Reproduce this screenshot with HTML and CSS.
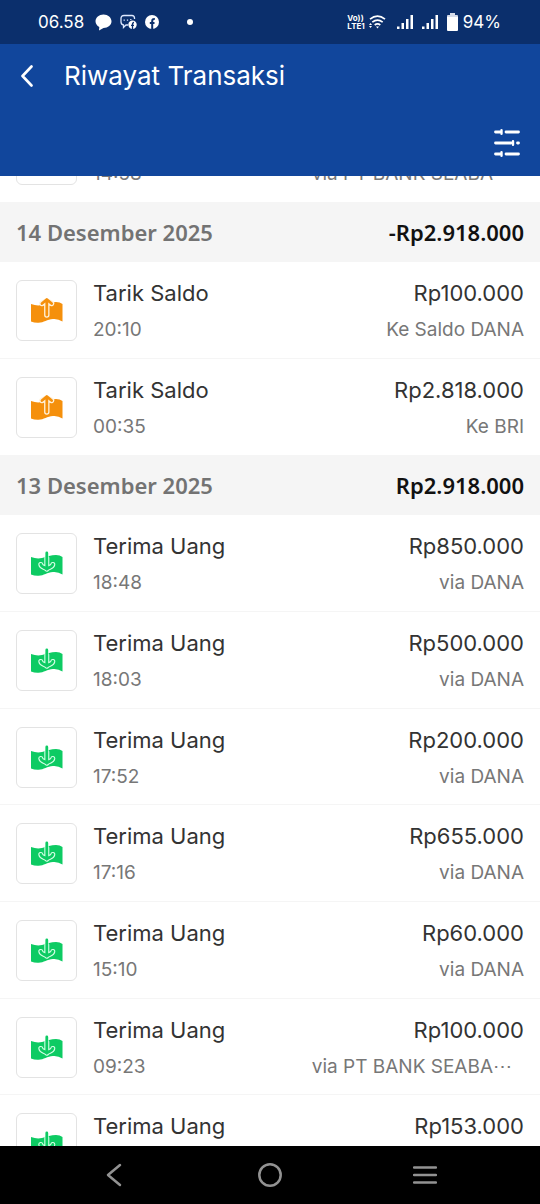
FILE: index.html
```html
<!DOCTYPE html>
<html lang="id">
<head>
<meta charset="utf-8">
<meta name="viewport" content="width=device-width, initial-scale=1">
<title>Riwayat Transaksi</title>
<link rel="stylesheet" href="styles.css">
</head>
<body>
<svg class="sprite" width="0" height="0" aria-hidden="true">
  <symbol id="money-in" viewBox="0 0 32 28">
    <path fill="#0dcb63" d="M0 7Q6 9.300 11 8C16 6.500 20 5 25 5Q29 5 31.500 7V24.500Q27 21.500 22 22C16 22.500 13 25.500 7.500 25.800Q3.500 26 0 24.500Z"/>
    <path fill="none" stroke="#d5ffe6" stroke-width="5" stroke-linecap="round" stroke-linejoin="round" d="M9.800 14.500 C10.300 17.500 14 17 15.800 19.200 C17.600 17 21.300 17.500 21.800 14.500 M15.800 8 V17"/>
    <path fill="none" stroke="#0dcb63" stroke-width="2.800" stroke-linecap="round" stroke-linejoin="round" d="M9.800 14.500 C10.300 17.500 14 17 15.800 19.200 C17.600 17 21.300 17.500 21.800 14.500 M15.800 3 V18"/>
  </symbol>
  <symbol id="money-out" viewBox="0 0 32 28">
    <path fill="#f5900c" d="M0 7Q6 9.300 11 8C16 6.500 20 5 25 5Q29 5 31.500 7V24.500Q27 21.500 22 22C16 22.500 13 25.500 7.500 25.800Q3.500 26 0 24.500Z"/>
    <path fill="none" stroke="#fff1da" stroke-width="5.400" stroke-linecap="round" stroke-linejoin="round" d="M11 6.500L15.800 4L20.600 6.500M15.800 7V18"/>
    <path fill="none" stroke="#f5900c" stroke-width="2.800" stroke-linecap="round" stroke-linejoin="round" d="M11 6.500L15.800 2.500L20.600 6.500M15.800 3.500V18"/>
  </symbol>
</svg>
<div class="screen">
  <div class="status">
    <div class="status-side">
      <span class="clock">06.58</span>
      <svg width="17" height="17" viewBox="0 0 17 17" fill="#fff"><path d="M8.500 0.500C13 .5 16.500 3.500 16.500 7.300S13 14 8.500 14L4 16.500 4.300 13C2 11.800.5 9.800.5 7.300.5 3.500 4 .5 8.500.5Z"/></svg>
      <svg width="17" height="17" viewBox="0 0 17 17" fill="none" stroke="#dfe9ff" stroke-width="1.300"><path d="M14.500 5V4Q14.500 1.500 12 1.500H4Q1 1.500 1 4.500V8Q1 10.500 3.500 11V13.500L6 11H8"/><path d="M4.200 5.500v1.200M7.500 5.500v1.200M10.800 5v1"/><circle cx="12.500" cy="10.700" r="4.200" fill="#fff" stroke="none"/><path stroke="#0b2f6c" d="M12.500 15V10Q12.500 8.500 14 8.500M11 11.300h3"/></svg>
      <svg width="14" height="14" viewBox="0 0 14 14"><circle cx="7" cy="7" r="7" fill="#fff"/><path fill="none" stroke="#0b2f6c" stroke-width="2" d="M7.200 14V6Q7.200 3.800 9.800 4M4.800 8h4.700"/></svg>
      <span class="dot"></span>
    </div>
    <div class="status-side status-right">
      <span class="lte"><span>Vo))</span><span>LTE1</span></span>
      <svg width="17" height="14" viewBox="0 0 17 14" fill="none" stroke="#fff" stroke-width="1.700"><path d="M1 4.200Q8.500-2 16 4.200M3.300 7.200Q8.500 3 13.700 7.200M5.700 10Q8.500 7.800 11.300 10"/><path fill="#fff" stroke="none" d="M7 11.500h3L8.500 13.500ZM0 10l1.500-2L3 10ZM0 11h3l-1.500 2Z"/></svg>
      <svg class="signal" width="16" height="15" viewBox="0 0 16 15" fill="#fff"><path d="M0 11.500h2.500V14H0ZM4.500 8H7v6H4.500ZM9 4h2.500v10H9ZM13.500 0H16v14h-2.500Z"/></svg>
      <svg class="signal" width="16" height="15" viewBox="0 0 16 15" fill="#fff"><path d="M0 11.500h2.500V14H0ZM4.500 8H7v6H4.500ZM9 4h2.500v10H9ZM13.500 0H16v14h-2.500Z"/></svg>
      <svg class="battery" width="11" height="18" viewBox="0 0 11 18"><path fill="#d6dcea" d="M3 0h5v2h2q1 0 1 1v2H0V3q0-1 1-1h2Z"/><path fill="#fff" d="M0 4h11v13q0 1-1 1H1q-1 0-1-1Z"/></svg>
      <span class="percent">94%</span>
    </div>
  </div>
  <header class="appbar">
    <div class="title-row">
      <button class="icon-button" type="button" aria-label="Kembali"><svg width="12" height="22" viewBox="0 0 12 22" fill="none" stroke="#fff" stroke-width="2.600" stroke-linecap="round" stroke-linejoin="round"><path d="M10.500 1.500L1.500 11l9 9.500"/></svg></button>
      <h1>Riwayat Transaksi</h1>
    </div>
    <button class="icon-button filter" type="button" aria-label="Filter"><svg width="26" height="28" viewBox="0 0 26 28" fill="none" stroke="#fff" stroke-width="2.800" stroke-linecap="round"><path d="M1.500 3H6M12 3h12.500M1.500 14H17M23.500 14h1M1.500 25H6M12 25h12.500"/><path stroke-width="2.400" d="M7.500 1.200v3.600M19 12.200v3.600M7.500 23.200v3.600"/></svg></button>
  </header>
  <main class="history">
    <ul class="rows scrolled">
      <li class="row"><span class="tile"><svg><use href="#money-in"/></svg></span><span class="info"><span class="name">Terima Uang</span><span class="note">14:58</span></span><span class="info end"><span class="name">Rp100.000</span><span class="note cut">via PT BANK SEABA</span></span></li>
    </ul>
    <h2 class="day"><span>14 Desember 2025</span><span class="sum">-Rp2.918.000</span></h2>
    <ul class="rows">
      <li class="row"><span class="tile"><svg><use href="#money-out"/></svg></span><span class="info"><span class="name">Tarik Saldo</span><span class="note">20:10</span></span><span class="info end"><span class="name">Rp100.000</span><span class="note">Ke Saldo DANA</span></span></li>
      <li class="row"><span class="tile"><svg><use href="#money-out"/></svg></span><span class="info"><span class="name">Tarik Saldo</span><span class="note">00:35</span></span><span class="info end"><span class="name">Rp2.818.000</span><span class="note">Ke BRI</span></span></li>
    </ul>
    <h2 class="day"><span>13 Desember 2025</span><span class="sum">Rp2.918.000</span></h2>
    <ul class="rows">
      <li class="row"><span class="tile"><svg><use href="#money-in"/></svg></span><span class="info"><span class="name">Terima Uang</span><span class="note">18:48</span></span><span class="info end"><span class="name">Rp850.000</span><span class="note">via DANA</span></span></li>
      <li class="row"><span class="tile"><svg><use href="#money-in"/></svg></span><span class="info"><span class="name">Terima Uang</span><span class="note">18:03</span></span><span class="info end"><span class="name">Rp500.000</span><span class="note">via DANA</span></span></li>
      <li class="row"><span class="tile"><svg><use href="#money-in"/></svg></span><span class="info"><span class="name">Terima Uang</span><span class="note">17:52</span></span><span class="info end"><span class="name">Rp200.000</span><span class="note">via DANA</span></span></li>
      <li class="row"><span class="tile"><svg><use href="#money-in"/></svg></span><span class="info"><span class="name">Terima Uang</span><span class="note">17:16</span></span><span class="info end"><span class="name">Rp655.000</span><span class="note">via DANA</span></span></li>
      <li class="row"><span class="tile"><svg><use href="#money-in"/></svg></span><span class="info"><span class="name">Terima Uang</span><span class="note">15:10</span></span><span class="info end"><span class="name">Rp60.000</span><span class="note">via DANA</span></span></li>
      <li class="row"><span class="tile"><svg><use href="#money-in"/></svg></span><span class="info"><span class="name">Terima Uang</span><span class="note">09:23</span></span><span class="info end"><span class="name">Rp100.000</span><span class="note cut">via PT BANK SEABA⋯</span></span></li>
      <li class="row"><span class="tile"><svg><use href="#money-in"/></svg></span><span class="info"><span class="name">Terima Uang</span></span><span class="info end"><span class="name">Rp153.000</span></span></li>
    </ul>
  </main>
  <nav class="navbar">
    <button class="icon-button" type="button" aria-label="Kembali"><svg width="24" height="24" viewBox="0 0 24 24"><path d="M17 2L5 12l12 10"/></svg></button>
    <button class="icon-button" type="button" aria-label="Beranda"><svg width="24" height="24" viewBox="0 0 24 24"><circle cx="12" cy="12" r="10.700"/></svg></button>
    <button class="icon-button" type="button" aria-label="Menu"><svg width="24" height="24" viewBox="0 0 24 24"><path d="M1 4.500h22M1 12h22M1 19.500h22"/></svg></button>
  </nav>
</div>
</body>
</html>
```
FILE: styles.css
```css
* { box-sizing: border-box; }
body { margin: 0; background: #fff; font-family: Inter, "Liberation Sans", sans-serif; }
h1, h2, ul { margin: 0; padding: 0; }
ul { list-style: none; }
svg { display: block; flex: none; }
.sprite { position: absolute; }
.screen { display: flex; flex-direction: column; height: 100vh; overflow: hidden; }
.icon-button { display: flex; align-items: center; justify-content: center; padding: 0; border: 0; background: none; }

.status { flex: none; display: flex; justify-content: space-between; height: 44px; padding: 0 39px 0 38px; background: #0b2f6c; color: #fff; }
.status-side { display: flex; align-items: center; gap: 8px; }
.status-right { gap: 4px; }
.clock, .percent { font-size: 17px; line-height: 20px; }
.clock { margin-right: 3px; }
.dot { width: 6px; height: 6px; margin-left: 20px; border-radius: 50%; background: #fff; }
.lte { display: flex; flex-direction: column; font-size: 8px; line-height: 8px; font-weight: 700; }
.signal { margin-left: 7px; }
.signal + .signal { margin-left: 5px; }
.battery { margin-left: 5px; }
.percent { margin-left: 1px; }

.appbar { flex: none; display: flex; flex-direction: column; justify-content: space-between; height: 132px; padding: 14px 20px 19px; background: #11469c; color: #fff; }
.title-row { display: flex; align-items: center; gap: 30px; height: 36px; }
.title-row .icon-button { width: 14px; height: 36px; }
h1 { font-size: 26px; line-height: 36px; font-weight: 400; }
.filter { align-self: flex-end; }

.history { flex: 1; min-height: 0; overflow: hidden; }
.scrolled { margin-top: -70px; }
.row { display: flex; gap: 16px; height: 97px; padding: 18px 16px 0; border-bottom: 1px solid #f5f5f5; }
.row:nth-child(3n) { height: 96px; }
.tile { flex: none; display: flex; align-items: center; justify-content: center; width: 61px; height: 61px; border: 1px solid #e3e3e3; border-radius: 6px; }
.tile svg { width: 32px; height: 28px; }
.info { flex: 1; display: flex; flex-direction: column; gap: 10px; white-space: nowrap; }
.end { align-items: flex-end; }
.name { font-size: 22px; line-height: 26px; font-weight: 400; color: #333; }
.note { font-size: 19px; line-height: 28px; font-weight: 400; color: #777; }
.cut { margin-right: 12px; }
.scrolled .cut { margin-right: 31px; }
.day { display: flex; align-items: center; justify-content: space-between; height: 59px; padding: 0 16px 2px; background: #f5f5f5; font: 600 22px/30px "Noto Sans", "Open Sans", sans-serif; color: #737373; }
.sum { color: #111; }

.navbar { flex: none; display: grid; grid-template-columns: repeat(3, 155px); justify-content: center; align-items: center; height: 58px; background: #000; }
.navbar svg { fill: none; stroke: #929292; stroke-width: 2.500; stroke-linecap: round; stroke-linejoin: round; }
```
